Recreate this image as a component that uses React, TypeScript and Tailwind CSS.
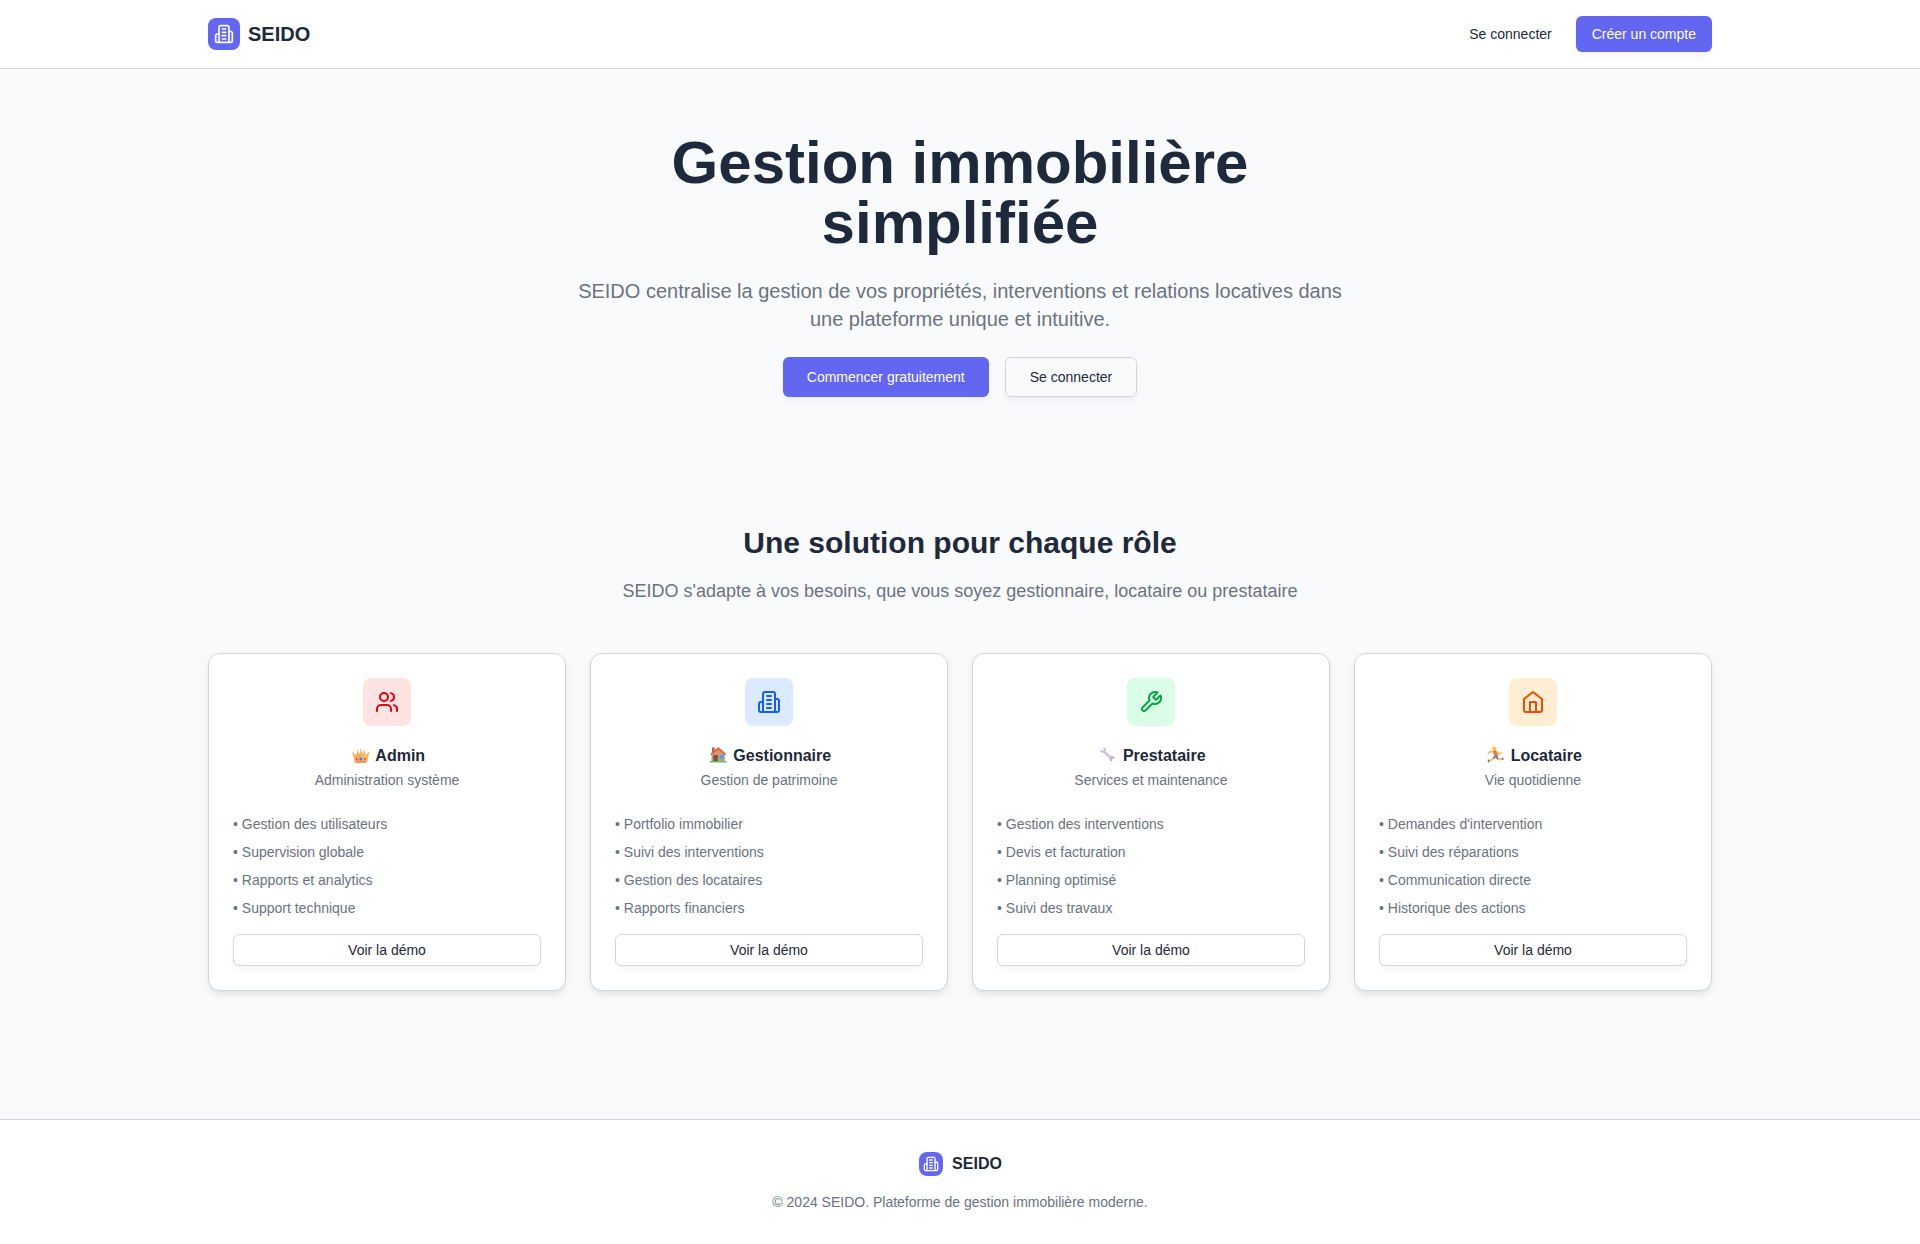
import type { ReactNode } from "react";

type IconProps = { className?: string };

function Icon({ className, children }: { className?: string; children: ReactNode }) {
  return (
    <svg
      viewBox="0 0 24 24"
      fill="none"
      stroke="currentColor"
      strokeWidth="2"
      strokeLinecap="round"
      strokeLinejoin="round"
      className={className}
    >
      {children}
    </svg>
  );
}

function BuildingIcon({ className }: IconProps) {
  return (
    <Icon className={className}>
      <path d="M6 22V4a2 2 0 0 1 2-2h8a2 2 0 0 1 2 2v18Z" />
      <path d="M6 12H4a2 2 0 0 0-2 2v6a2 2 0 0 0 2 2h2" />
      <path d="M18 9h2a2 2 0 0 1 2 2v9a2 2 0 0 1-2 2h-2" />
      <path d="M10 6h4" />
      <path d="M10 10h4" />
      <path d="M10 14h4" />
      <path d="M10 18h4" />
    </Icon>
  );
}

function UsersIcon({ className }: IconProps) {
  return (
    <Icon className={className}>
      <path d="M16 21v-2a4 4 0 0 0-4-4H6a4 4 0 0 0-4 4v2" />
      <circle cx="9" cy="7" r="4" />
      <path d="M22 21v-2a4 4 0 0 0-3-3.87" />
      <path d="M16 3.13a4 4 0 0 1 0 7.75" />
    </Icon>
  );
}

function WrenchIcon({ className }: IconProps) {
  return (
    <Icon className={className}>
      <path d="M14.7 6.3a1 1 0 0 0 0 1.4l1.6 1.6a1 1 0 0 0 1.4 0l3.77-3.77a6 6 0 0 1-7.94 7.94l-6.91 6.91a2.12 2.12 0 0 1-3-3l6.91-6.91a6 6 0 0 1 7.94-7.94l-3.76 3.76z" />
    </Icon>
  );
}

function HomeIcon({ className }: IconProps) {
  return (
    <Icon className={className}>
      <path d="m3 9 9-7 9 7v11a2 2 0 0 1-2 2H5a2 2 0 0 1-2-2z" />
      <path d="M9 22V12h6v10" />
    </Icon>
  );
}

function CrownEmoji() {
  return (
    <svg viewBox="-0.7 -0.8 20 20" className="h-5 w-5">
      <path d="M2 8.3l3.4 2 1.5-4 2.1 3L10.1 5l1.2 4.3 2.1-3 1.4 4 3.4-2-1.9 9.2c-4 1-8.4 1-12.4 0z" fill="#f6ac5a" />
      <path d="M10.1 5l1.2 4.3 2.1-3 1.4 4 3.4-2-1.9 9.2c-1.9.5-4 .7-6.2.7z" fill="#fbbd62" />
      <path d="M4.3 15.5c3.800 1 7.800 1 11.700 0l-.3 2c-3.700.9-7.400.9-11.100 0z" fill="#ef9560" />
      <g fill="#f3c26b">
        <circle cx="2.3" cy="8.2" r=".9" />
        <circle cx="6.7" cy="6.3" r=".8" />
        <circle cx="10.1" cy="5.2" r=".9" />
        <circle cx="13.5" cy="6.3" r=".8" />
        <circle cx="17.9" cy="8.2" r=".9" />
      </g>
      <circle cx="10.1" cy="14.3" r="1.5" fill="#3c7df0" />
      <circle cx="6" cy="14.2" r=".9" fill="#e8345a" />
      <circle cx="14.2" cy="14.2" r=".9" fill="#e8345a" />
    </svg>
  );
}

function HouseEmoji() {
  return (
    <svg viewBox="0 -0.4 20 20" className="h-5 w-5">
      <path d="M4 3h2.600v5H4z" fill="#a9614d" />
      <path d="M3.5 9.5l7-5 6.300 5V17H3.500z" fill="#d39a70" />
      <path d="M10.3 2.6l8 7.100-1.100 1.200-6.900-5.500-6.900 5.500-1.200-1.200z" fill="#e5633f" />
      <path d="M5.3 10.7h4.500V17H5.300z" fill="#7d4f48" />
      <path d="M11.6 10.4h3.800v3.900h-3.800z" fill="#35b0f1" />
      <path d="M1.8 16.6h16.700v1.500H1.800z" fill="#47c970" />
    </svg>
  );
}

function WrenchEmoji() {
  return (
    <svg viewBox="-0.4 -0.4 20 20" className="h-5 w-5">
      <path d="M6.2 6.7l7.600 7.200" stroke="#cdbfe0" strokeWidth="2.3" />
      <path d="M3 4.700l2 1.900 1.800-1.700-1.700-1.800c2.200-.8 4.200.9 3.700 3.300l-2 2c-2.400.6-4.700-1.300-3.800-3.700z" fill="#cfc8d8" />
      <path d="M12.100 13.400l1.900-1.700c2-.5 3.800 1 3.300 2.900l-1.500-.6-1.300 1.300.8 1.800c-2.100.5-3.900-1.500-3.200-3.700z" fill="#c3bad0" />
    </svg>
  );
}

function RunnerEmoji() {
  return (
    <svg viewBox="-0.6 -0.4 20 20" className="h-5 w-5" fill="none" strokeLinecap="round" strokeLinejoin="round">
      <path d="M8.2 7.3L4.600 7 2.700 9.200" stroke="#fcb83f" strokeWidth="1.5" />
      <path d="M11.2 7.7l2.200 2.100 2.800-2" stroke="#fcb83f" strokeWidth="1.4" />
      <path d="M8.2 13l-1.700 2.400-3.200.8" stroke="#fbb944" strokeWidth="1.6" />
      <path d="M11.5 13.5l2 1.700 3.100-.8" stroke="#fbb944" strokeWidth="1.6" />
      <path d="M9.2 7.3l1.300 3.600" stroke="#fb7442" strokeWidth="3.6" />
      <path d="M9.7 11.8l-1.400 1.700m2.300-1.800l1.200 2.200" stroke="#8b7f9b" strokeWidth="2.2" />
      <circle cx="8.5" cy="4.1" r="2.1" fill="#fdc446" />
      <path d="M2.6 15.7l.8 1.600m13.400-3.700l.5 1.500" stroke="#6d6585" strokeWidth="1.3" />
    </svg>
  );
}

const roles = [
  {
    name: "Admin",
    subtitle: "Administration système",
    emoji: <CrownEmoji />,
    icon: <UsersIcon className="h-6 w-6" />,
    tone: "bg-red-100 text-red-600",
    features: ["Gestion des utilisateurs", "Supervision globale", "Rapports et analytics", "Support technique"],
  },
  {
    name: "Gestionnaire",
    subtitle: "Gestion de patrimoine",
    emoji: <HouseEmoji />,
    icon: <BuildingIcon className="h-6 w-6" />,
    tone: "bg-blue-100 text-blue-600",
    features: ["Portfolio immobilier", "Suivi des interventions", "Gestion des locataires", "Rapports financiers"],
  },
  {
    name: "Prestataire",
    subtitle: "Services et maintenance",
    emoji: <WrenchEmoji />,
    icon: <WrenchIcon className="h-6 w-6" />,
    tone: "bg-green-100 text-green-600",
    features: ["Gestion des interventions", "Devis et facturation", "Planning optimisé", "Suivi des travaux"],
  },
  {
    name: "Locataire",
    subtitle: "Vie quotidienne",
    emoji: <RunnerEmoji />,
    icon: <HomeIcon className="h-6 w-6" />,
    tone: "bg-orange-100 text-orange-600",
    features: ["Demandes d'intervention", "Suivi des réparations", "Communication directe", "Historique des actions"],
  },
];

export default function App() {
  return (
    <div className="min-h-screen bg-[#f9fafc] font-['Liberation_Sans',Arial,sans-serif] text-[#1e293b]">
      <header className="border-b border-gray-300 bg-white">
        <div className="mx-auto flex max-w-[1536px] items-center justify-between px-4 py-4">
          <div className="flex items-center gap-2">
            <div className="flex h-8 w-8 items-center justify-center rounded-lg bg-[#6366f1] text-white">
              <BuildingIcon className="h-5 w-5" />
            </div>
            <span className="text-xl font-bold">SEIDO</span>
          </div>
          <nav className="flex items-center gap-2">
            <button className="h-9 rounded-md px-4 text-sm font-medium">Se connecter</button>
            <button className="h-9 rounded-md bg-[#6366f1] px-4 text-sm font-medium text-white shadow-[0_4px_6px_-1px_rgba(0,0,0,0.05)]">
              Créer un compte
            </button>
          </nav>
        </div>
      </header>

      <main>
        <section className="py-16 text-center">
          <div className="mx-auto max-w-3xl">
            <h1 className="mb-6 text-6xl font-bold">Gestion immobilière simplifiée</h1>
            <p className="mb-6 text-xl text-[#6b7280]">
              SEIDO centralise la gestion de vos propriétés, interventions et relations locatives dans une plateforme
              unique et intuitive.
            </p>
            <div className="flex justify-center gap-4">
              <button className="h-10 rounded-md bg-[#6366f1] px-6 text-sm font-medium text-white shadow-[0_4px_6px_-1px_rgba(0,0,0,0.05)]">
                Commencer gratuitement
              </button>
              <button className="h-10 rounded-md border border-gray-300 bg-[#f9fafc] px-6 text-sm font-medium shadow-[0_4px_6px_-1px_rgba(0,0,0,0.05)]">
                Se connecter
              </button>
            </div>
          </div>
        </section>

        <section className="mx-auto max-w-[1536px] px-4 py-16">
          <div className="mb-12 text-center">
            <h2 className="mb-4 text-3xl font-bold">Une solution pour chaque rôle</h2>
            <p className="text-lg/7 text-[#6b7280]">
              SEIDO s'adapte à vos besoins, que vous soyez gestionnaire, locataire ou prestataire
            </p>
          </div>
          <div className="mb-16 grid grid-cols-4 gap-6">
            {roles.map((role) => (
              <article
                key={role.name}
                className="rounded-xl border border-gray-300 bg-white p-6 shadow-[0_4px_8px_-1px_rgba(0,0,0,0.1),0_2px_4px_-2px_rgba(0,0,0,0.06)]"
              >
                <div className={`mx-auto mb-4 flex h-12 w-12 items-center justify-center rounded-lg ${role.tone}`}>
                  {role.icon}
                </div>
                <h3 className="mb-1 flex h-6 items-center justify-center gap-[5.5px] pl-px text-base font-bold">
                  {role.emoji}
                  <span className="pt-1">{role.name}</span>
                </h3>
                <p className="mb-6 text-center text-sm text-[#6b7280]">{role.subtitle}</p>
                <ul className="mb-4 space-y-2 text-sm text-[#6b7280]">
                  {role.features.map((feature) => (
                    <li key={feature}>• {feature}</li>
                  ))}
                </ul>
                <button className="h-8 w-full rounded-md border border-gray-300 bg-white text-sm font-medium shadow-[0_4px_6px_-1px_rgba(0,0,0,0.05)]">
                  Voir la démo
                </button>
              </article>
            ))}
          </div>
        </section>
      </main>

      <footer className="border-t border-gray-300 bg-white py-8">
        <div className="flex items-center justify-center gap-[9px] pl-px">
          <div className="flex h-6 w-6 items-center justify-center rounded-lg bg-[#6366f1] text-white">
            <BuildingIcon className="h-4 w-4" />
          </div>
          <span className="font-bold">SEIDO</span>
        </div>
        <p className="mt-4 text-center text-sm text-[#6b7280]">
          © 2024 SEIDO. Plateforme de gestion immobilière moderne.
        </p>
      </footer>
    </div>
  );
}
